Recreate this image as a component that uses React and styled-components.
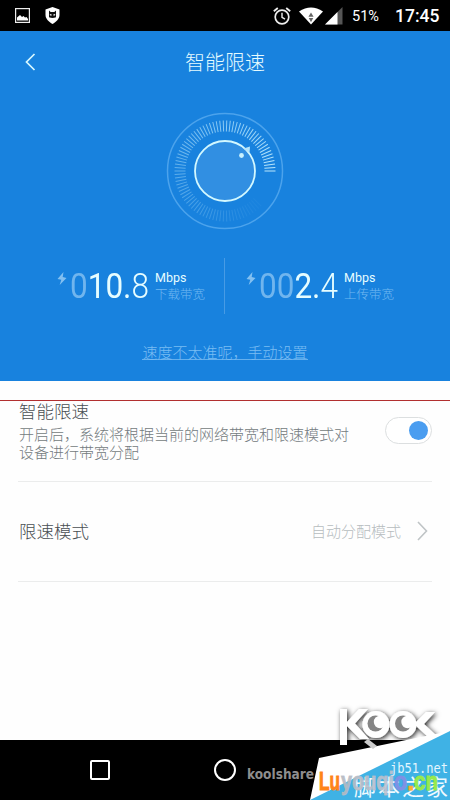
import React from 'react';
import styled, { createGlobalStyle } from 'styled-components';

const GlobalStyle = createGlobalStyle`
  * { box-sizing: border-box; }
  body {
    margin: 0;
    background: #fff;
    font-family: Roboto, "Noto Sans CJK SC", sans-serif;
  }
`;

const Screen = styled.div`
  position: relative;
  display: flex;
  flex-direction: column;
  width: 450px;
  height: 800px;
  overflow: hidden;
  background: #fefefe;
`;

const StatusBar = styled.div`
  display: flex;
  align-items: center;
  justify-content: space-between;
  height: 31px;
  padding: 0 11px 0 15px;
  background: #000;
  color: #fff;
`;

const StatusGroup = styled.div`
  display: flex;
  align-items: center;
  gap: ${props => props.$gap || 0}px;
`;

const WifiIcon = styled.svg`
  margin: 0 2px 0 8px;
`;

const Battery = styled.span`
  width: 28px;
  margin: 2px 15px 0 9px;
  font-size: 14.5px;
  line-height: 20px;
  white-space: nowrap;
`;

const Clock = styled.span`
  width: 44px;
  margin-top: 1px;
  font-size: 17.5px;
  font-weight: 500;
  line-height: 20px;
  white-space: nowrap;
`;

const Hero = styled.section`
  display: flex;
  flex-direction: column;
  align-items: center;
  height: 350px;
  background: #1882de;
`;

const TitleBar = styled.header`
  display: grid;
  grid-template-columns: 60px 1fr 60px;
  align-items: center;
  width: 100%;
  height: 63px;
`;

const BackIcon = styled.svg`
  margin: 0 0 1px 24px;
`;

const Title = styled.h1`
  margin: 1px 0 0;
  color: #e6fbff;
  font-size: 20px;
  font-weight: 300;
  line-height: 30px;
  text-align: center;
`;

const DialSvg = styled.svg`
  margin-top: 18px;
`;

const Speeds = styled.div`
  display: grid;
  grid-template-columns: 224px 1px 225px;
  width: 100%;
  height: 56px;
  margin-top: 28px;
`;

const Divider = styled.div`
  background: #479be5;
`;

const Speed = styled.div`
  display: flex;
  padding: 12px 0 0 ${props => props.$inset}px;
`;

const BoltIcon = styled.svg`
  flex: none;
  margin: 2px 3px 0 0;
`;

const Digits = styled.div`
  width: 80px;
  color: #e6fdff;
  font-size: 35px;
  font-weight: 400;
  line-height: 33px;
  white-space: nowrap;
  transform: scaleX(0.9);
  transform-origin: 0 50%;
`;

const Faded = styled.span`
  color: #70b5ee;
`;

const Thin = styled.span`
  font-weight: 300;
`;

const Unit = styled.div`
  display: flex;
  flex-direction: column;
  margin-left: 5px;
`;

const UnitName = styled.span`
  color: #e6fdff;
  font-size: 12.5px;
  line-height: 16px;
`;

const UnitCaption = styled.span`
  color: #72b8f1;
  font-size: 12.5px;
  font-weight: 300;
  line-height: 18px;
`;

const ManualLink = styled.a`
  height: 18px;
  margin-top: 28px;
  border-bottom: 1px solid #65b0ee;
  color: #7abdf3;
  font-size: 15px;
  font-weight: 300;
  line-height: 22px;
`;

const Settings = styled.main`
  display: flex;
  flex-direction: column;
  height: 359px;
  padding: 0 18px;
`;

const Row = styled.div`
  display: flex;
  justify-content: space-between;
  align-items: ${props => props.$align || 'center'};
  height: ${props => props.$height}px;
  padding-top: ${props => props.$top || 0}px;
  border-bottom: 1px solid #ebecec;
`;

const RowTitle = styled.div`
  padding-left: 1px;
  color: #484e52;
  font-size: 17.5px;
  font-weight: 300;
  line-height: 22px;
`;

const RowText = styled.div`
  width: 340px;
  margin-top: 3px;
  padding-left: 1px;
  color: #747b80;
  font-size: 15px;
  font-weight: 300;
  line-height: 18px;
`;

const Switch = styled.div`
  display: flex;
  align-items: center;
  justify-content: flex-end;
  width: 47px;
  height: 27px;
  margin-top: 16px;
  padding-right: 3px;
  border: 1px solid #dcdfe0;
  border-radius: 14px;
  background: #fff;
`;

const Knob = styled.div`
  width: 19px;
  height: 19px;
  border-radius: 50%;
  background: #4a9df0;
`;

const Mode = styled.div`
  display: flex;
  align-items: center;
  gap: 16px;
  margin-bottom: 2px;
  padding-right: 4px;
  color: #b6bcbf;
  font-size: 15px;
  font-weight: 300;
`;

const NavBar = styled.nav`
  display: flex;
  align-items: center;
  height: 60px;
  padding-left: 89px;
  gap: 102px;
  background: #000;
`;

const RedLine = styled.div`
  position: absolute;
  top: 400px;
  left: 0;
  width: 100%;
  height: 1px;
  background: #b23030;
`;

const Watermark = styled.svg`
  position: absolute;
  left: 230px;
  top: 700px;
`;

const TICKS = 90;

// Ticks start at three o'clock and fade out counter-clockwise.
const Dial = () => (
  <DialSvg width="118" height="118" viewBox="-59 -59 118 118">
    <circle r="57.5" fill="none" stroke="#4ca3ec" strokeWidth="1.5" />
    {Array.from({ length: TICKS - 10 }, (_, i) => (
      <line
        key={i}
        x1="39.5"
        x2="50.5"
        stroke="#c8f0ff"
        strokeWidth="1"
        opacity={Math.max(0.04, 0.92 - i * 0.0115)}
        transform={`rotate(${-i * (360 / TICKS)})`}
      />
    ))}
    <circle r="30" fill="#318fe2" stroke="#d2f8ff" strokeWidth="1.8" />
    <path d="M18.5 -22.5 L25 -24.5 L24.5 -18 Z" fill="#b5e4fb" />
    <circle cx="16.5" cy="-15.5" r="2.4" fill="#c9f1fd" />
  </DialSvg>
);

const Bolt = () => (
  <BoltIcon width="10" height="14" viewBox="0 0 10 14">
    <path d="M6.5 0 L0.5 7 L4.3 7.8 L2.7 13 L9.5 6 L5.7 5 Z" fill="#83c0f1" />
  </BoltIcon>
);

const SpeedMeter = ({ inset, faded, value, decimals, caption }) => (
  <Speed $inset={inset}>
    <Bolt />
    <Digits><Faded>{faded}</Faded>{value}.<Thin>{decimals}</Thin></Digits>
    <Unit>
      <UnitName>Mbps</UnitName>
      <UnitCaption>{caption}</UnitCaption>
    </Unit>
  </Speed>
);

const StatusIcons = () => (
  <StatusGroup $gap={15}>
    <svg width="15" height="15" viewBox="0 0 15 15">
      <rect x="0.6" y="0.6" width="13.8" height="13.8" fill="none" stroke="#eee" strokeWidth="1.2" />
      <path d="M2 12.5 V9.5 L5 7 L7 9 L8.5 8 L10 9.5 L11.5 9 L13 11 V12.5 Z" fill="#fff" />
    </svg>
    <svg width="15" height="17" viewBox="0 0 15 17">
      <path d="M7.5 0 L14.5 2.5 V8 C14.5 12 11 15 7.5 17 C4 15 0.5 12 0.5 8 V2.5 Z" fill="#fff" />
      <path d="M4 3.5 L5.7 5 H9.3 L11 3.5 V10.3 Q7.5 11.6 4 10.3 Z" fill="#111" />
      <path d="M4.8 7 L6.7 7.6 V8.6 H5 Z M10.2 7 L8.3 7.6 V8.6 H10 Z" fill="#fff" />
    </svg>
  </StatusGroup>
);

const SignalIcons = () => (
  <StatusGroup>
    <svg width="18" height="18" viewBox="0 0 18 18" fill="none" stroke="#eee">
      <circle cx="9" cy="10" r="6.8" strokeWidth="1.7" />
      <path d="M9 5.8 V10.3 L12 12.2" strokeWidth="1.4" />
      <path d="M0.8 4.3 L4.8 1 M17.2 4.3 L13.2 1" strokeWidth="1.8" />
    </svg>
    <WifiIcon width="24" height="18" viewBox="0 0 24 18">
      <path d="M0 4.5 Q12 -3.5 24 4.5 L12 17.5 Z" fill="#fff" />
      <path d="M9.4 9.8 L12 5.5 L14.6 9.8 Z M9.8 11 H14.2 L12 15.2 Z" fill="#666" />
    </WifiIcon>
    <svg width="18" height="18" viewBox="0 0 18 18">
      <path d="M0 17.5 L17.5 0 V17.5 Z" fill="#555" />
      <path d="M0 17.5 L12.5 5 V17.5 Z" fill="#fff" />
    </svg>
  </StatusGroup>
);

const Marks = () => (
  <Watermark width="220" height="100" viewBox="0 0 220 100">
    <defs>
      <filter id="shade" x="-20%" y="-20%" width="150%" height="150%">
        <feDropShadow dx="1.5" dy="1.5" stdDeviation="2.8" floodColor="#000" floodOpacity="0.85" />
      </filter>
      <linearGradient id="luyou" x1="0" x2="1">
        <stop offset="0" stopColor="#b4b8be" />
        <stop offset="1" stopColor="#bfc5d6" />
      </linearGradient>
    </defs>
    <g filter="url(#shade)" fill="#fff">
      <path d="M110 9 H117 V22 L129 9 H138 L125 23.5 L139 39 H130 L117 26 V45 H110 Z" />
      <circle cx="146" cy="24.5" r="13.5" />
      <circle cx="173" cy="24.5" r="13.5" />
      <path d="M196 12 H205 L194 24 L208 37 H198 L184 24 Z" />
    </g>
    <circle cx="145.5" cy="23.5" r="8" fill="#858585" />
    <circle cx="150" cy="22" r="6.2" fill="#fff" />
    <circle cx="173" cy="23.5" r="8" fill="#858585" />
    <circle cx="177.5" cy="22" r="6.2" fill="#fff" />
    <path d="M89 58 L220 31 V100 H80 Z" fill="#fff" />
    <path d="M220 31 V100 H80 Z" fill="#3fb2e5" />
    <path d="M134 42 L138 39 L147 46 L143 49 Z" fill="#ccc" />
    <text x="17" y="79" fontFamily="DejaVu Sans" fontWeight="700" fontSize="13.5" fill="#8e8e8e" textLength="67" lengthAdjust="spacingAndGlyphs">koolshare</text>
    <text x="160" y="73" fontFamily="DejaVu Sans Mono" fontSize="14" fill="#e3f6ff" textLength="58" lengthAdjust="spacingAndGlyphs">jb51.net</text>
    <text x="124" y="95" fontFamily="Noto Sans CJK SC" fontSize="22" fill="#effaff" textLength="94">脚本之家</text>
    <g fontFamily="Liberation Sans" fontWeight="700" fontSize="26" strokeWidth="1">
      <text x="89" y="90" fill="#ff8419" stroke="#ff8419" textLength="21" lengthAdjust="spacingAndGlyphs">Lu</text>
      <text x="111" y="90" fill="url(#luyou)" stroke="#b8bdc8" fillOpacity="0.9" strokeOpacity="0.8" textLength="53" lengthAdjust="spacingAndGlyphs">youqi</text>
      <text x="164" y="90" fill="#7e91e4" stroke="#7e91e4" textLength="13" lengthAdjust="spacingAndGlyphs">o</text>
      <text x="177" y="90" fill="#ffad2e" stroke="#ffad2e">.</text>
      <text x="184" y="90" fill="#97e94d" stroke="#97e94d" textLength="24" lengthAdjust="spacingAndGlyphs">cn</text>
    </g>
  </Watermark>
);

const App = () => (
  <>
    <GlobalStyle />
    <Screen>
      <StatusBar>
        <StatusIcons />
        <StatusGroup>
          <SignalIcons />
          <Battery>51%</Battery>
          <Clock>17:45</Clock>
        </StatusGroup>
      </StatusBar>
      <Hero>
        <TitleBar>
          <BackIcon width="12" height="18" viewBox="0 0 12 18">
            <path d="M10.5 1 L2.5 9 L10.5 17" fill="none" stroke="#d8f8ff" strokeWidth="1.7" />
          </BackIcon>
          <Title>智能限速</Title>
        </TitleBar>
        <Dial />
        <Speeds>
          <SpeedMeter inset={57} faded="0" value="10" decimals="8" caption="下载带宽" />
          <Divider />
          <SpeedMeter inset={21} faded="00" value="2" decimals="4" caption="上传带宽" />
        </Speeds>
        <ManualLink>速度不太准呢，手动设置</ManualLink>
      </Hero>
      <Settings>
        <Row $height={101} $top={20} $align="flex-start">
          <div>
            <RowTitle>智能限速</RowTitle>
            <RowText>开启后，系统将根据当前的网络带宽和限速模式对设备进行带宽分配</RowText>
          </div>
          <Switch><Knob /></Switch>
        </Row>
        <Row $height={100}>
          <RowTitle>限速模式</RowTitle>
          <Mode>
            自动分配模式
            <svg width="11" height="20" viewBox="0 0 11 20">
              <path d="M1 1 L9.5 10 L1 19" fill="none" stroke="#bfc4c6" strokeWidth="1.6" />
            </svg>
          </Mode>
        </Row>
      </Settings>
      <NavBar>
        <svg width="21" height="20" viewBox="0 0 21 20">
          <rect x="2" y="1" width="18" height="18" rx="1" fill="none" stroke="#fff" strokeWidth="2" />
        </svg>
        <svg width="24" height="24" viewBox="0 0 24 24">
          <circle cx="13" cy="12" r="10" fill="none" stroke="#fff" strokeWidth="2" />
        </svg>
      </NavBar>
      <RedLine />
      <Marks />
    </Screen>
  </>
);

export default App;
